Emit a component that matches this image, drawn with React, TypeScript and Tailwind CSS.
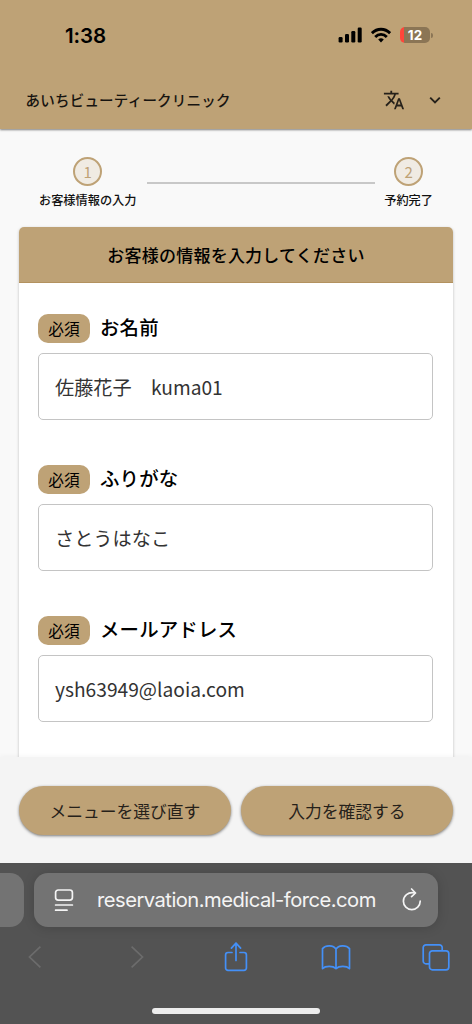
import React from 'react'

interface Field {
  id: string
  label: string
  value: string
}

const fields: Field[] = [
  { id: 'name', label: 'お名前', value: '佐藤花子　kuma01' },
  { id: 'kana', label: 'ふりがな', value: 'さとうはなこ' },
  { id: 'email', label: 'メールアドレス', value: 'ysh63949@laoia.com' },
]

function StatusBar() {
  return (
    <div className="flex h-[70px] items-center justify-between pl-[65px] pr-[39px] font-['Inter',sans-serif]">
      <span className="pt-px text-[20.5px] leading-6 font-semibold tracking-[-0.1px] text-black">1:38</span>
      <div className="flex items-center">
        <svg className="h-4 w-6" viewBox="0 0 24 16" fill="#000">
          <rect x="0.6" y="10" width="4" height="5.4" rx="1.2" />
          <rect x="7" y="7" width="4" height="8.4" rx="1.2" />
          <rect x="13.3" y="4" width="4" height="11.4" rx="1.2" />
          <rect x="19.7" y="0.6" width="4" height="14.8" rx="1.2" />
        </svg>
        <svg className="ml-[9px] h-4 w-5" viewBox="0 0 20 16" fill="none" stroke="#000" strokeWidth="2.8">
          <path d="M0.9 6.2C6 0.9 14 0.9 19.1 6.2" />
          <path d="M4.2 10C7.5 6.5 12.5 6.5 15.8 10" />
          <path d="M7.2 12.4Q10 10.2 12.8 12.4L10 15.4Z" fill="#000" stroke="none" />
        </svg>
        <div className="ml-[9px] flex h-4 w-[30px] items-center justify-center overflow-hidden rounded-[5px] bg-gradient-to-r from-[#ff453a] from-[13%] to-[#8b7555] to-[13%]">
          <span className="text-[13.5px] leading-4 font-bold text-white">12</span>
        </div>
        <span className="ml-[1px] h-[5px] w-[2px] rounded-r-full bg-[#8b7555]" />
      </div>
    </div>
  )
}

function ClinicHeader() {
  return (
    <header className="relative h-[129px] bg-[#bea276] shadow-[0_1px_2px_rgba(0,0,0,0.5)]">
      <StatusBar />
      <div className="flex h-[59px] items-center justify-between pl-[25.5px] pr-[31px]">
        <h1 className="text-[14.5px] leading-5 font-medium tracking-[0.22px] text-[#171410]">あいちビューティークリニック</h1>
        <div className="flex items-center text-[#26211a]">
          <svg className="h-[22px] w-[22px]" viewBox="0 0 24 24" fill="currentColor">
            <path d="m12.87 15.07-2.54-2.51.03-.03c1.74-1.94 2.98-4.17 3.71-6.53H17V4h-7V2H8v2H1v1.99h11.17C11.5 7.92 10.44 9.75 9 11.35 8.07 10.32 7.3 9.19 6.69 8h-2c.73 1.63 1.73 3.17 2.98 4.56l-5.09 5.02L4 19l5-5 3.11 3.11.76-2.04zM18.5 10h-2L12 22h2l1.12-3h4.75L21 22h2l-4.5-12zm-2.62 7 1.62-4.33L19.12 17h-3.24z" />
          </svg>
          <svg className="ml-[24px] h-[12px] w-[12px]" viewBox="0 0 12 12" fill="none" stroke="currentColor" strokeWidth="1.9">
            <path d="M1.2 3.6 6 8.4 10.8 3.6" />
          </svg>
        </div>
      </div>
    </header>
  )
}

function Step({ number, label }: { number: number; label: string }) {
  return (
    <div className="flex flex-col items-center">
      <span className="flex h-[29px] w-[29px] items-center justify-center rounded-full border-2 border-[#bea276] bg-[#f0ebe3] text-[15px] leading-none text-[#bea276]">
        {number}
      </span>
      <span className="mt-[5px] text-[12.2px] leading-[18px] font-medium whitespace-nowrap text-[#111]">{label}</span>
    </div>
  )
}

function FormField({ field }: { field: Field }) {
  return (
    <div className="h-[151px]">
      <div className="flex h-[29px]">
        <span className="flex h-[29px] w-[52px] items-center justify-center rounded-[10px] bg-[#bea276] text-[15.7px] leading-none text-black">
          必須
        </span>
        <label className="ml-[10px] -mt-[2px] text-[19.4px] leading-[30px] font-medium tracking-[0.2px] text-black">{field.label}</label>
      </div>
      <div className="mt-[10px] flex h-[67px] items-center rounded-[5px] border border-[#c4c4c4] bg-white px-4 pt-px text-[19.2px] text-[#333]">
        {field.value}
      </div>
    </div>
  )
}

function PillButton({ children }: { children: React.ReactNode }) {
  return (
    <button className="h-[49px] flex-1 rounded-full bg-[#bea276] pt-px text-[16.75px] leading-none text-[#26211a] shadow-[0_1px_3px_rgba(0,0,0,0.5)]">
      {children}
    </button>
  )
}

function BrowserBar() {
  return (
    <div className="h-[161px] bg-[#535353] pt-[10px]">
      <div className="flex h-[54px]">
        <div className="w-6 rounded-r-[14px] bg-[#737373]" />
        <div className="ml-[10px] flex w-[404px] items-center rounded-[14px] bg-[#737373] pl-[20px] pr-[16px] text-[#f4f4f4] shadow-[0_1px_12px_rgba(0,0,0,0.16)]">
          <svg className="h-6 w-5 shrink-0" viewBox="0 0 20 24" fill="none" stroke="currentColor" strokeWidth="1.7" strokeLinecap="round">
            <rect x="1.6" y="2" width="16.8" height="10.2" rx="2.6" />
            <path d="M1.6 17h16.8M1.6 22.2h11.4" />
          </svg>
          <span className="ml-[23px] w-[280px] text-[20.2px] leading-6 whitespace-nowrap font-['Inter',sans-serif] tracking-[-0.52px]">
            reservation.medical-force.com
          </span>
          <svg className="ml-[25px] h-6 w-5 shrink-0" viewBox="0 0 20 24" fill="none" stroke="currentColor" strokeWidth="1.7" strokeLinecap="round" strokeLinejoin="round">
            <path d="M12.4 4.9C6 3.7 1.4 8 1.4 13.2a8.3 8.3 0 0 0 16.8 0" />
            <path d="M9.6 1 13.5 5 9.6 8.7" />
          </svg>
        </div>
      </div>

      {/* Toolbar */}
      <div className="mt-[14px] flex h-[32px] items-center pl-[28px] text-[#4490f7]">
        <svg className="h-6 w-[14px]" viewBox="0 0 14 24" fill="none" stroke="#6c6c6c" strokeWidth="1.7">
          <path d="M12.4 1.7 1.5 12l10.9 10.3" />
        </svg>
        <svg className="ml-[88px] h-6 w-[14px]" viewBox="0 0 14 24" fill="none" stroke="#6c6c6c" strokeWidth="1.7">
          <path d="M1.6 1.7 12.5 12 1.6 22.3" />
        </svg>
        <svg className="ml-[80px] h-[32px] w-[24px]" viewBox="0 0 24 32" fill="none" stroke="currentColor" strokeWidth="1.7" strokeLinecap="round" strokeLinejoin="round">
          <path d="M8 11.5H4a2.4 2.4 0 0 0-2.4 2.4v13a2.4 2.4 0 0 0 2.4 2.4h16a2.4 2.4 0 0 0 2.4-2.4v-13a2.4 2.4 0 0 0-2.4-2.4h-4" />
          <path d="M12 19.5V2.2M7.4 7.2 12 2.2l4.6 5" />
        </svg>
        <svg className="ml-[73px] h-[26px] w-[30px]" viewBox="0 0 30 26" fill="none" stroke="currentColor" strokeWidth="1.7" strokeLinejoin="round">
          <path d="M15 5.2C12.6 1 4.9.6 1.5 4.6v20c3-3 10.4-3 13.5 0 3.1-3 10.5-3 13.5 0v-20C25.1.6 17.4 1 15 5.2v19.4" />
        </svg>
        <svg className="ml-[71px] h-[28px] w-[28px]" viewBox="0 0 28 28" fill="none" stroke="currentColor" strokeWidth="1.7" strokeLinejoin="round">
          <rect x="7.5" y="7.8" width="19.3" height="19" rx="2.8" />
          <path d="M7.5 20.8H4a2.8 2.8 0 0 1-2.8-2.8V4.6A2.8 2.8 0 0 1 4 1.8h13.4a2.8 2.8 0 0 1 2.8 2.8v3.2" />
        </svg>
      </div>
      <div className="mx-auto mt-[35px] h-[6px] w-[168px] rounded-full bg-[#ededed]" />
    </div>
  )
}

export default function App() {
  return (
    <div className="flex h-[1024px] w-[472px] flex-col overflow-hidden bg-[#f9f9f9] font-['Noto_Sans_CJK_JP',sans-serif]">
      <ClinicHeader />

      <main className="h-[628px] overflow-hidden">
        {/* Reservation steps */}
        <div className="flex h-[98px] items-start pt-[28px] pl-[39px] pr-[39px]">
          <Step number={1} label="お客様情報の入力" />
          <div className="ml-[10px] mr-[9px] mt-[25px] h-[1.5px] flex-1 bg-[#c8c8c8]" />
          <Step number={2} label="予約完了" />
        </div>

        <section className="mx-[19px] h-[600px] rounded-[5px] bg-white shadow-[0_1px_3px_rgba(0,0,0,0.25)]">
          <h2 className="flex h-[56px] items-center justify-center rounded-t-[5px] border-b border-[#b3925f] bg-[#bea276] pb-px text-[17px] leading-none font-medium tracking-[0.22px] text-black">
            お客様の情報を入力してください
          </h2>
          <div className="pt-[31px] pl-[19px] pr-[20px]">
            {fields.map((field) => (
              <FormField key={field.id} field={field} />
            ))}
          </div>
        </section>
      </main>

      <footer className="relative flex h-[106px] shrink-0 gap-[10px] bg-[#f4f4f4] px-[19px] pt-[29px] shadow-[0_-1px_5px_rgba(0,0,0,0.04)]">
        <PillButton>メニューを選び直す</PillButton>
        <PillButton>入力を確認する</PillButton>
      </footer>
      <BrowserBar />
    </div>
  )
}
